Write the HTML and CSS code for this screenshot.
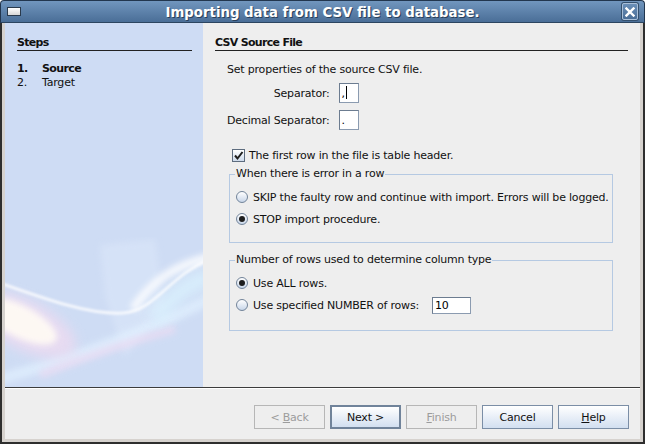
FILE: index.html
```html
<!DOCTYPE html>
<html lang="en">
<head>
  <meta charset="UTF-8">
  <meta name="viewport" content="width=device-width, initial-scale=1.0">
  <title>Importing data from CSV file to database.</title>
  <link rel="stylesheet" href="styles.css">
</head>
<body>
  <div class="window">
    <!-- Window title bar -->
    <div class="titlebar">
      <span class="win-icon"></span>
      <span class="title">Importing data from CSV file to database.</span>
      <span class="close-btn">
        <svg width="10" height="10" viewBox="0 0 10 10">
          <path d="M1.5 1.5 L8.5 8.5 M8.5 1.5 L1.5 8.5" stroke="#fff" stroke-width="2.4" stroke-linecap="square"/>
        </svg>
      </span>
    </div>

    <div class="frame">
      <div class="content">
        <div class="main">
          <!-- Wizard steps -->
          <aside class="steps">
            <h2 class="section-title">Steps</h2>
            <ol class="step-list">
              <li class="current"><span class="num">1.</span>Source</li>
              <li><span class="num">2.</span>Target</li>
            </ol>
            <svg class="swirl" width="198" height="150" viewBox="0 0 198 150">
              <defs>
                <filter id="b6" x="-50%" y="-50%" width="200%" height="200%"><feGaussianBlur stdDeviation="6"/></filter>
                <filter id="b3" x="-50%" y="-50%" width="200%" height="200%"><feGaussianBlur stdDeviation="3"/></filter>
                <filter id="b1" x="-50%" y="-50%" width="200%" height="200%"><feGaussianBlur stdDeviation="1.2"/></filter>
              </defs>
              <path d="M95 8 L150 2 L160 70 L120 120 L100 60 Z" fill="#dde8fa" opacity="0.5" filter="url(#b3)"/>
              <path d="M-5 142 C60 124 130 100 205 62" stroke="#e2f1ff" stroke-width="11" fill="none" opacity="0.7" filter="url(#b3)"/>
              <path d="M35 138 C80 120 120 106 170 92" stroke="#efdcf3" stroke-width="8" fill="none" opacity="0.65" filter="url(#b3)"/>
              <ellipse cx="20" cy="88" rx="56" ry="25" transform="rotate(27 20 88)" fill="#f1daf0" opacity="0.7" filter="url(#b6)"/>
              <ellipse cx="14" cy="84" rx="42" ry="16" transform="rotate(27 14 84)" fill="#fffaf4" opacity="0.95" filter="url(#b3)"/>
              <path d="M150 82 C168 58 184 46 205 40" stroke="#dcf4ff" stroke-width="18" fill="none" opacity="0.7" filter="url(#b6)"/>
              <path d="M-5 46 C40 62 85 78 118 76 C150 74 165 38 205 22" stroke="#ffffff" stroke-width="3" fill="none" opacity="0.75" filter="url(#b1)"/>
              <path d="M128 72 C148 42 172 28 205 20" stroke="#ffffff" stroke-width="8" fill="none" opacity="0.85" filter="url(#b3)"/>
            </svg>
          </aside>

          <!-- Current step -->
          <section class="panel">
            <h2 class="section-title">CSV Source File</h2>
            <p class="intro">Set properties of the source CSV file.</p>

            <div class="sep-grid">
              <label class="sep-label">Separator:</label>
              <span class="field field-small">,<span class="caret"></span></span>
              <label class="sep-label">Decimal Separator:</label>
              <span class="field field-small">.</span>
            </div>

            <div class="check-row">
              <span class="checkbox">
                <svg width="11" height="11" viewBox="0 0 11 11">
                  <path d="M2 5.5 L4.5 8.5 L9.5 2" stroke="#1e1e1e" stroke-width="2" fill="none"/>
                </svg>
              </span>
              The first row in the file is table header.
            </div>

            <fieldset class="group">
              <legend>When there is error in a row</legend>
              <div class="option"><span class="radio"></span>SKIP the faulty row and continue with import. Errors will be logged.</div>
              <div class="option"><span class="radio on"></span>STOP import procedure.</div>
            </fieldset>

            <fieldset class="group group-rows">
              <legend>Number of rows used to determine column type</legend>
              <div class="option"><span class="radio on"></span>Use ALL rows.</div>
              <div class="option"><span class="radio"></span>Use specified NUMBER of rows:<span class="field field-number">10</span></div>
            </fieldset>
          </section>
        </div>

        <!-- Wizard buttons -->
        <div class="buttons">
          <button class="btn" disabled>&lt; <u>B</u>ack</button>
          <button class="btn btn-default">Next &gt;</button>
          <button class="btn" disabled><u>F</u>inish</button>
          <button class="btn">Cancel</button>
          <button class="btn"><u>H</u>elp</button>
        </div>
      </div>
    </div>
  </div>
</body>
</html>
```

FILE: styles.css
```css
/* Whole page */
html, body {
  margin: 0;
  padding: 0;
}

body {
  font-family: "DejaVu Sans", sans-serif;
  font-size: 11px;
  letter-spacing: -0.2px;
  color: #111;
  background: #fff;
}

.window {
  width: 645px;
  height: 444px;
}

/* Title bar */
.titlebar {
  box-sizing: border-box;
  height: 23px;
  display: grid;
  grid-template-columns: 1fr auto 1fr;
  align-items: center;
  background: linear-gradient(#7196be, #4a6e97);
  border: 1px solid #22364e;
  border-bottom-color: #2c4560;
  border-radius: 4px 4px 0 0;
}

.win-icon {
  justify-self: start;
  margin-left: 6px;
  width: 12px;
  height: 7px;
  border: 1px solid #2a3a4c;
  background: linear-gradient(#ffffff, #d6d6d6);
}

.title {
  padding-top: 1px;
  font-size: 13.3px;
  font-weight: bold;
  letter-spacing: 0;
  color: #fff;
  text-shadow: 1px 1px 0 #2a405a;
  white-space: nowrap;
}

.close-btn {
  justify-self: end;
  margin-right: 6px;
  width: 14px;
  height: 15px;
  display: flex;
  align-items: center;
  justify-content: center;
  border: 1px solid #a9bfd8;
  border-radius: 2px;
  box-shadow: 0 0 0 1px #34506e;
  background: linear-gradient(#6a8fb8, #4a6e97);
}

/* Frame round the dialog */
.frame {
  box-sizing: border-box;
  height: 421px;
  padding: 0 3px 3px;
  border: 2px solid #2e2e2e;
  border-top: 0;
  background: #d6d2ce;
}

.content {
  height: 416px;
  display: flex;
  flex-direction: column;
  background: #eeeeee;
}

.main {
  height: 364px;
  display: flex;
}

.section-title {
  margin: 0;
  font-size: 11px;
  font-weight: bold;
  letter-spacing: -0.7px;
  line-height: 14px;
  border-bottom: 1px solid #222;
}

/* Steps column */
.steps {
  position: relative;
  flex: none;
  width: 198px;
  box-sizing: border-box;
  padding: 13px 11px 0 12px;
  background: #cedcf4;
  overflow: hidden;
}

.step-list {
  list-style: none;
  margin: 11px 0 0;
  padding: 0;
}

.step-list li {
  line-height: 14px;
  display: flex;
}

.step-list .num {
  width: 25px;
}

.step-list .current {
  font-weight: bold;
  letter-spacing: -0.6px;
}

.swirl {
  position: absolute;
  left: 0;
  bottom: 0;
}

/* Step panel */
.panel {
  flex: 1;
  min-width: 0;
  padding: 13px 12px 0;
}

.intro {
  margin: 12px 0 0 12px;
  line-height: 14px;
}

.sep-grid {
  display: grid;
  grid-template-columns: auto 20px;
  column-gap: 9px;
  row-gap: 7px;
  align-items: center;
  width: max-content;
  margin: 6px 0 0 12px;
}

.sep-label {
  justify-self: end;
}

.field {
  box-sizing: border-box;
  display: inline-flex;
  align-items: flex-end;
  background: #fff;
  border: 1px solid #8b9bb0;
  border-top-color: #6c7c90;
  border-left-color: #6c7c90;
  padding: 0 2px 2px;
  line-height: 13px;
  color: #000;
}

.field-small {
  width: 20px;
  height: 20px;
}

.caret {
  width: 1px;
  height: 13px;
  margin: 0 0 0 1px;
  background: #000;
  align-self: center;
}

.check-row {
  display: flex;
  align-items: center;
  gap: 4px;
  height: 14px;
  margin: 18px 0 0 17px;
}

.checkbox {
  box-sizing: border-box;
  width: 13px;
  height: 13px;
  display: flex;
  align-items: center;
  justify-content: center;
  border: 1px solid #5d6c7e;
  background: linear-gradient(#ffffff, #cddaeb);
}

/* Group boxes */
.group {
  min-width: 0;
  margin: 5px 15px 0 14px;
  padding: 5px 6px 12px;
  border: 1px solid #b5c9e2;
}

.group legend {
  padding: 0 1px;
  margin-left: -1px;
  line-height: 14px;
}

.group-rows {
  margin-top: 10px;
  padding-bottom: 14px;
}

.option {
  display: flex;
  align-items: center;
  gap: 5px;
  height: 22px;
  white-space: nowrap;
}

.radio {
  position: relative;
  box-sizing: border-box;
  flex: none;
  width: 12px;
  height: 12px;
  border-radius: 50%;
  border: 1px solid #72849a;
  background: linear-gradient(#ffffff, #c8d6e9);
}

.radio.on::after {
  content: '';
  position: absolute;
  inset: 2px;
  border-radius: 50%;
  background: #1e1e1e;
}

.field-number {
  width: 39px;
  height: 17px;
  margin-left: 8px;
  padding-bottom: 1px;
}

/* Bottom buttons */
.buttons {
  flex: 1;
  display: flex;
  justify-content: flex-end;
  gap: 5px;
  padding: 17px 11px 0 0;
  border-top: 1px solid #3c3c3c;
  box-shadow: inset 0 1px 0 #ffffff;
}

.btn {
  box-sizing: border-box;
  width: 71px;
  height: 24px;
  font-family: "DejaVu Sans", sans-serif;
  font-size: 11px;
  letter-spacing: -0.2px;
  color: #111;
  border: 1px solid #7b8ea6;
  background: linear-gradient(#ffffff, #d2dff0);
  padding: 0;
}

.btn-default {
  border: 2px solid #70839a;
}

.btn:disabled {
  color: #9c9c9c;
  border-color: #b6b6b6;
  background: #eeeeee;
}
```
